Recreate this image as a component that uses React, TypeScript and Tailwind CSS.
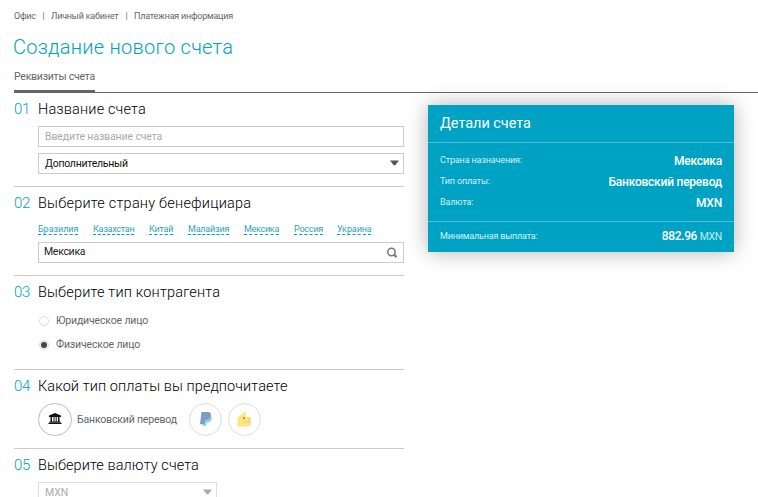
import React from 'react';

function Section({ num, title, spacing, className, children }: { num: string; title: string; spacing: string; className: string; children: React.ReactNode }) {
  return (
    <section className={`border-b border-[#cccccc] ${className}`}>
      <h2 className="flex h-[33px] items-center text-[14.5px] leading-none text-black">
        <span className="w-6 text-[15px] font-light tracking-[-0.4px] text-[#00a2c3]">{num}</span>
        <span className={`pt-0.5 font-light whitespace-nowrap ${spacing}`}>{title}</span>
      </h2>
      <div className="pl-6">{children}</div>
    </section>
  );
}

function Arrow({ color }: { color: string }) {
  return (
    <svg width="9" height="6" viewBox="0 0 9 6" className={`-mt-px ${color}`} fill="currentColor">
      <path d="M0 .5h9L5.3 5.2H3.7z" />
    </svg>
  );
}

const countries = [
  { name: 'Бразилия', style: 'w-10 mr-[15px] tracking-[-0.05px]' },
  { name: 'Казахстан', style: 'w-[41px] mr-[15px] tracking-[-0.25px]' },
  { name: 'Китай', style: 'w-6 mr-[15px] tracking-[-0.2px]' },
  { name: 'Малайзия', style: 'w-[41px] mr-[15px] tracking-[-0.2px]' },
  { name: 'Мексика', style: 'w-[35px] mr-[15px] tracking-[-0.3px]' },
  { name: 'Россия', style: 'w-[29px] mr-[14px] tracking-[-0.2px]' },
  { name: 'Украина', style: 'w-[34px] tracking-[-0.1px]' },
];

const details = [
  ['Страна назначения:', 'Мексика'],
  ['Тип оплаты:', 'Банковский перевод'],
  ['Валюта:', 'MXN'],
];

export default function App() {
  return (
    <div className="h-[497px] w-[758px] overflow-hidden bg-white pl-[14px] font-['Roboto','Liberation_Sans',sans-serif] text-[#666666]">
      <nav className="flex h-8 items-center whitespace-nowrap text-[9px] leading-none">
        <span className="w-[22px] tracking-[-0.2px]">Офис</span>
        <span className="w-[15px] text-center">|</span>
        <span className="w-[68px] tracking-[-0.2px]">Личный кабинет</span>
        <span className="w-[15px] text-center">|</span>
        <span className="tracking-[-0.23px]">Платежная информация</span>
      </nav>
      <h1 className="-ml-px flex h-[30px] items-center text-[20px] leading-none font-light tracking-[0.26px] text-[#00a2c3]">Создание нового счета</h1>
      <div className="flex h-[31px] items-end border-b border-[#666666]">
        <div className="flex h-[31px] w-[81px] items-center border-b-2 border-[#666666] pt-[3px] text-[10.5px] leading-none tracking-[-0.24px] whitespace-nowrap">Реквизиты счета</div>
      </div>
      <div className="flex">
        <main className="w-[390px] shrink-0">
          <Section num="01" title="Название счета" spacing="tracking-[0.15px]" className="h-[94px]">
            <div className="flex h-[21px] items-center border border-[#cccccc] pt-px pl-1.5 text-[10.5px] leading-none tracking-[-0.12px] text-[#aaaaaa]">Введите название счета</div>
            <div className="mt-1.5 flex h-[21px] items-center justify-between border border-[#cccccc] pr-1 pl-1.5 text-[10.5px] leading-none tracking-[-0.25px] text-[#111111]">
              <span className="pt-0.5">Дополнительный</span>
              <Arrow color="text-[#555555]" />
            </div>
          </Section>
          <Section num="02" title="Выберите страну бенефициара" spacing="tracking-[0.22px]" className="h-[89px]">
            <div className="flex h-4 pt-1 text-[9px] leading-[11px] whitespace-nowrap text-[#2aa4c2]">
              {countries.map((c) => (
                <a key={c.name} className={`h-[11px] shrink-0 border-b border-dashed border-[#00a2c3] ${c.style}`}>{c.name}</a>
              ))}
            </div>
            <div className="mt-[6px] flex h-[21px] items-center justify-between border border-[#cccccc] pr-[5px] pl-[5px] text-[10.5px] leading-none tracking-[-0.3px] text-[#222222]">
              <span>Мексика</span>
              <svg width="12" height="12" viewBox="0 0 12 12" fill="none" stroke="#777777">
                <circle cx="5.5" cy="5" r="3.7" strokeWidth="1.5" />
                <path d="M8.2 7.8l2.3 2.3" strokeWidth="2.2" />
              </svg>
            </div>
          </Section>
          <Section num="03" title="Выберите тип контрагента" spacing="tracking-[0.17px]" className="h-[94px]">
            <div className="flex h-6 items-center pl-[1px] text-[10.5px] leading-none tracking-[-0.15px]">
              <span className="mr-[7px] h-[10px] w-[10px] rounded-full border border-[#dddddd]" />
              <span className="pt-px">Юридическое лицо</span>
            </div>
            <div className="flex h-6 items-center pl-[1px] text-[10.5px] leading-none tracking-[-0.15px]">
              <span className="mr-[7px] flex h-[10px] w-[10px] items-center justify-center rounded-full border border-[#dddddd] bg-[#eeeeee]">
                <span className="h-1.5 w-1.5 rounded-full bg-[#444444]" />
              </span>
              <span className="pt-px">Физическое лицо</span>
            </div>
          </Section>
          <Section num="04" title="Какой тип оплаты вы предпочитаете" spacing="tracking-[0.08px]" className="h-[79px]">
            <div className="flex h-[33px] items-center">
              <span className="flex h-[33px] w-[34px] items-center justify-center rounded-full border border-[#bbbbbb]">
                <svg width="14" height="12" viewBox="0 0 14 12" fill="#111111" className="-mt-0.5">
                  <path d="M7 0l6 2.5V4H1V2.500zM2.500 4H4v4.500H2.500zM5.500 4h1v4.500h-1zM7.700 4h1v4.500h-1zM10 4h1.500v4.500H10zM1.500 8.500h11v1h-11zM.5 9.700h13V11H.5z" />
                </svg>
              </span>
              <span className="w-[117px] pt-px pl-[5px] text-[10.5px] leading-none tracking-[-0.17px] whitespace-nowrap">Банковский перевод</span>
              <span className="mr-1.5 flex h-[33px] w-[33px] items-center justify-center rounded-full border border-[#dddddd]">
                <svg width="12" height="14" viewBox="0 0 12 14" className="-mt-0.5">
                  <path d="M3.5 3.5h6.5c2 .5 2.2 3.5 1.1 5-1 1.5-2.5 2-4.3 2L6 14H2.7z" fill="#8fd0f2" />
                  <path d="M1.5 0h6.5c2.5 0 3.4 1.7 2.7 4.2C10.1 7 8 8 5.2 8L4.2 12.3H0z" fill="#7c9ac4" />
                </svg>
              </span>
              <span className="flex h-[33px] w-[33px] items-center justify-center rounded-full border border-[#dddddd]">
                <svg width="14" height="16" viewBox="0 0 14 16" className="-mt-0.5 -ml-0.5">
                  <path d="M.5 6.5L9 0v6h4.5v9.5H.5z" fill="#ffe480" />
                  <path d="M5 12l6-1.500V7.500L13.500 6v6z" fill="#f2d878" />
                  <circle cx="7" cy="7" r="1" fill="#8f845a" />
                </svg>
              </span>
            </div>
          </Section>
          <Section num="05" title="Выберите валюту счета" spacing="tracking-[0.08px]" className="h-[79px]">
            <div className="flex h-[21px] w-[179px] items-center justify-between border border-[#dddddd] pr-1 pl-1.5 text-[10.5px] leading-none text-[#aaaaaa]">
              <span className="pt-px">MXN</span>
              <Arrow color="text-[#aaaaaa]" />
            </div>
          </Section>
        </main>
        <aside className="mt-3 ml-6 h-[147px] w-[306px] bg-[#00a2c3] text-white shadow-[0_0_20px_rgba(0,0,0,0.3)]">
          <h3 className="flex h-[38px] items-center border-b border-[#4dbed5] px-3 pt-0.5 text-[14.5px] leading-none tracking-[-0.05px]">Детали счета</h3>
          <div className="h-[79px] border-b border-[#4dbed5] px-3 pt-[7px]">
            {details.map(([k, v]) => (
              <div key={k} className="flex h-[21px] items-center justify-between leading-none">
                <span className="text-[9px] tracking-[-0.14px] text-[#d5f0f5]">{k}</span>
                <span className="text-[12px] font-medium tracking-[-0.23px]">{v}</span>
              </div>
            ))}
          </div>
          <div className="flex h-[29px] items-center justify-between px-3 leading-none">
            <span className="text-[9px] tracking-[-0.18px] text-[#d5f0f5]">Минимальная выплата:</span>
            <span className="text-[12px] font-medium tracking-[-0.35px]">882.96 <span className="text-[10.5px] font-normal text-[#c5eaf2]">MXN</span></span>
          </div>
        </aside>
      </div>
    </div>
  );
}
